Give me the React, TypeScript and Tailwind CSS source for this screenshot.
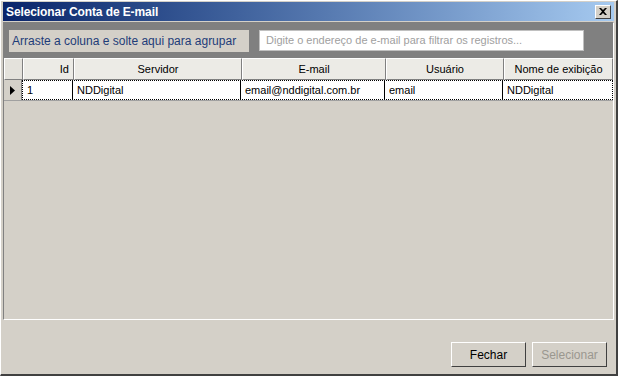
import React from "react";

const font = { fontFamily: '"Liberation Sans", Arial, sans-serif' };

const columns = [
    { label: "Id", width: "w-[51px]", align: "justify-end" },
    { label: "Servidor", width: "w-[168px]", align: "justify-center" },
    { label: "E-mail", width: "w-[144px]", align: "justify-center" },
    { label: "Usuário", width: "w-[118px]", align: "justify-center" },
    { label: "Nome de exibição", width: "w-[109px]", align: "justify-center" },
];

const row = ["1", "NDDigital", "email@nddigital.com.br", "email", "NDDigital"];

const App: React.FC = () => {
    return (
        <div
            className="w-[618px] h-[376px] bg-[#d4d0c8] border-l border-t border-[#ffffff] border-r-2 border-b-2 border-r-[#404040] border-b-[#404040] flex flex-col text-[11px] text-black"
            style={font}
        >
            {/* Title bar */}
            <div className="h-[19px] mx-[2px] mt-[1px] flex items-center justify-between bg-gradient-to-r from-[#0a246a] to-[#a6caf0] pl-[3px] pr-[3px]">
                <span className="text-white font-bold text-[12px] tracking-[-0.1px]">Selecionar Conta de E-mail</span>
                <button className="w-[16px] h-[14px] bg-[#d4d0c8] border border-t-white border-l-white border-r-[#404040] border-b-[#404040] flex items-center justify-center">
                    <svg width="8" height="7" viewBox="0 0 8 7">
                        <path d="M0 0h2l2 2 2-2h2L5 3.5 8 7H6L4 5 2 7H0l3-3.5z" fill="#000" />
                    </svg>
                </button>
            </div>

            {/* Grid */}
            <div className="mx-[2px] mt-[1px] h-[298px] border-l border-t border-[#808080] border-r border-b border-r-white border-b-white flex flex-col">
                {/* Group panel */}
                <div className="h-[35px] bg-[#808080] flex items-center pl-[5px] pr-[29px] gap-[10px]">
                    <div className="h-[22px] w-[240px] bg-[#d4d0c8] flex items-center pl-[3px] text-[#1e3c78] text-[12px]">
                        Arraste a coluna e solte aqui para agrupar
                    </div>
                    <div className="h-[21px] flex-1 bg-white border border-[#c0c0c0] flex items-center pl-[6px] text-[#a0a0a0] text-[11px]">
                        Digite o endereço de e-mail para filtrar os registros...
                    </div>
                </div>

                {/* Header */}
                <div className="flex h-[22px]">
                    <div className="w-[19px] bg-[#e4e2dc] border-t border-l border-white border-r border-b border-r-[#808080] border-b-[#808080]" />
                    {columns.map((c) => (
                        <div
                            key={c.label}
                            className={`${c.width} flex items-center ${c.align} px-[4px] bg-[#ecebe6] border-t border-l border-white border-r border-b border-r-[#808080] border-b-[#808080]`}
                        >
                            {c.label}
                        </div>
                    ))}
                </div>

                {/* Row */}
                <div className="flex h-[21px] border-b border-[#a0a0a0]">
                    <div className="w-[19px] bg-[#d4d0c8] flex items-center justify-center border-r border-[#808080]">
                        <svg width="5" height="9" viewBox="0 0 5 9">
                            <path d="M0 0l5 4.5L0 9z" fill="#000" />
                        </svg>
                    </div>
                    <div className="flex flex-1 bg-white border border-dotted border-black">
                        {columns.map((c, i) => (
                            <div
                                key={c.label}
                                className={`${i === 0 ? "w-[50px]" : c.width} flex items-center px-[4px] border-r border-black last:border-r-0`}
                            >
                                {row[i]}
                            </div>
                        ))}
                    </div>
                </div>

                <div className="flex-1 bg-[#d4d0c8]" />
            </div>

            {/* Footer */}
            <div className="flex-1 flex items-end justify-end gap-[6px] pr-[9px] pb-[7px]">
                <button className="w-[75px] h-[25px] bg-[#d4d0c8] border border-t-white border-l-white border-r-[#404040] border-b-[#404040] text-[12px]">
                    Fechar
                </button>
                <button className="w-[75px] h-[25px] bg-[#d4d0c8] border border-t-white border-l-white border-r-[#404040] border-b-[#404040] text-[12px] text-[#9a978f]">
                    Selecionar
                </button>
            </div>
        </div>
    );
};

export default App;
